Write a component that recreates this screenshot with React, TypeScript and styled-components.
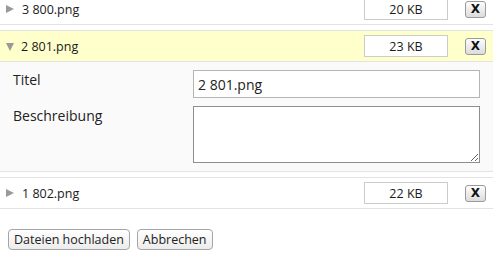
import React from "react";
import styled, { createGlobalStyle } from "styled-components";

const Global = createGlobalStyle`
  html, body { margin: 0; padding: 0; background: #fff; }
  body { font-family: "Open Sans", "Liberation Sans", sans-serif; color: #222; overflow: hidden; }
  * { box-sizing: border-box; }
`;

const Page = styled.div`
  width: 493px;
  height: 259px;
  overflow: hidden;
`;

const List = styled.div`
  margin-top: -7px;
  display: flex;
  flex-direction: column;
  gap: 5px;
`;

const Item = styled.div`
  display: flex;
  flex-direction: column;
`;

const Header = styled.div<{ $open?: boolean }>`
  height: 32px;
  display: flex;
  align-items: center;
  border-top: 1px solid #e3e3e3;
  border-bottom: 1px solid #e3e3e3;
  background: ${(p) => (p.$open ? "#ffffcc" : "#fff")};
  padding: 0 7px 0 6px;
  font-size: 12.5px;
  color: #1a1a1a;
`;

const Arrow = styled.span<{ $open?: boolean }>`
  width: 0;
  height: 0;
  ${(p) =>
    p.$open
      ? `border-left: 4.5px solid transparent; border-right: 4.5px solid transparent; border-top: 8px solid #999; margin: 1px 7px 0 0;`
      : `border-top: 4.5px solid transparent; border-bottom: 4.5px solid transparent; border-left: 8px solid #999; margin-right: 8px;`}
`;

const Name = styled.span`
  flex: 1;
`;

const Size = styled.div`
  width: 84px;
  height: 22px;
  border: 1px solid #ccc;
  background: #fff;
  display: flex;
  align-items: center;
  justify-content: center;
  font-size: 12.5px;
  margin-right: 17px;
`;

const RemoveButton = styled.button`
  width: 21px;
  height: 17px;
  padding: 0;
  border: 1px solid #9a9a9a;
  border-radius: 3px;
  background: linear-gradient(#fdfdfd, #dcdcdc);
  font-family: "DejaVu Sans", Verdana, sans-serif;
  font-weight: bold;
  font-size: 12px;
  line-height: 14px;
  color: #111;
`;

const Panel = styled.div`
  background: #fafafa;
  border-bottom: 1px solid #e3e3e3;
  padding: 8px 14px 8px 13px;
  display: grid;
  grid-template-columns: 180px 1fr;
  row-gap: 8px;
`;

const Label = styled.label`
  font-size: 14px;
  line-height: 19px;
`;

const TextInput = styled.input`
  width: 287px;
  height: 28px;
  border: 1px solid #b5b5b5;
  background: #fff;
  font-family: "Open Sans", "Liberation Sans", sans-serif;
  font-size: 14px;
  padding: 0 4px;
  color: #222;
`;

const TextArea = styled.textarea`
  width: 287px;
  height: 57px;
  border: 1px solid #8e8e8e;
  background: #fff;
  display: block;
  font-family: "Open Sans", "Liberation Sans", sans-serif;
  font-size: 14px;
  resize: both;
`;

const Actions = styled.div`
  display: flex;
  gap: 7px;
  padding: 20px 8px 0;
`;

const ActionButton = styled.button`
  height: 21px;
  padding: 0 5px;
  border: 1px solid #a5a5a5;
  border-radius: 4px;
  background: linear-gradient(#ffffff, #ececec);
  font-family: "Open Sans", "Liberation Sans", sans-serif;
  font-size: 12.5px;
  color: #222;
  line-height: 19px;
`;

type File = { name: string; size: string; open?: boolean };

const files: File[] = [
  { name: "3 800.png", size: "20 KB" },
  { name: "2 801.png", size: "23 KB", open: true },
  { name: "1 802.png", size: "22 KB" },
];

export default function App() {
  return (
    <Page>
      <Global />
      <List>
        {files.map((f) => (
          <Item key={f.name}>
            <Header $open={f.open}>
              <Arrow $open={f.open} />
              <Name>{f.name}</Name>
              <Size>{f.size}</Size>
              <RemoveButton>X</RemoveButton>
            </Header>
            {f.open && (
              <Panel>
                <Label>Titel</Label>
                <TextInput defaultValue={f.name} />
                <Label>Beschreibung</Label>
                <TextArea />
              </Panel>
            )}
          </Item>
        ))}
      </List>
      <Actions>
        <ActionButton>Dateien hochladen</ActionButton>
        <ActionButton>Abbrechen</ActionButton>
      </Actions>
    </Page>
  );
}
